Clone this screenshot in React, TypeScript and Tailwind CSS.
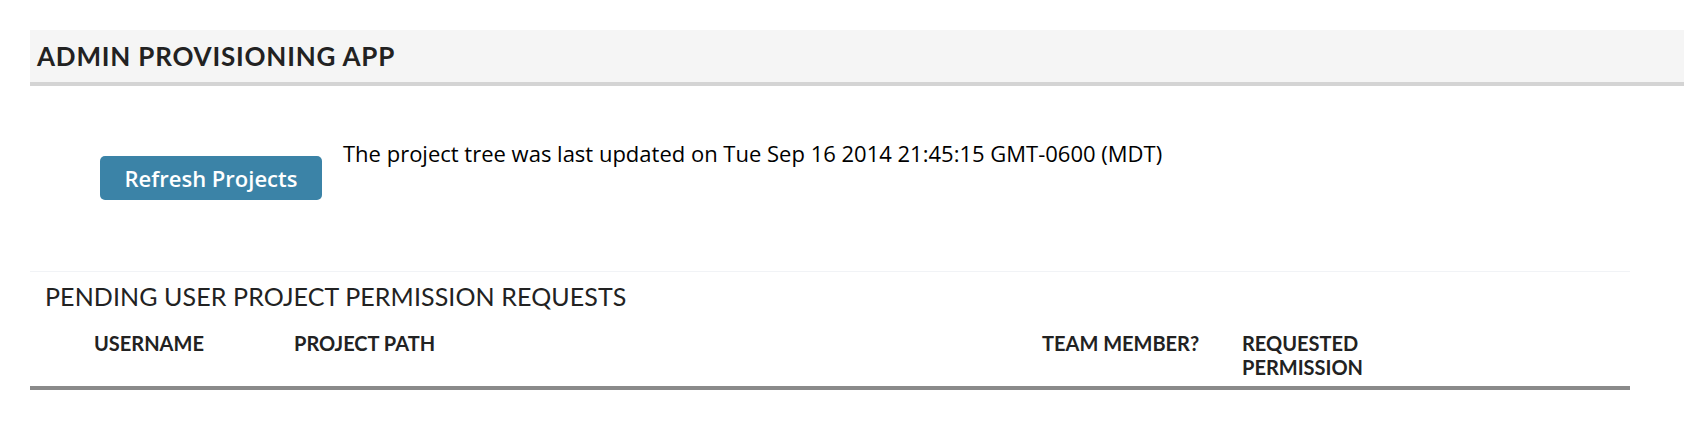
const columns = [
  { label: "USERNAME", width: "w-[200px]" },
  { label: "PROJECT PATH", width: "w-[748px]" },
  { label: "TEAM MEMBER?", width: "w-[200px]" },
  { label: "REQUESTED PERMISSION", width: "w-[140px]" },
];

function Header() {
  return (
    <div className="h-[56px] bg-[#f5f5f5] border-b-4 border-[#d4d4d4] flex items-center pl-[7px]">
      <h1 className="font-['Lato',sans-serif] font-bold text-[26px] tracking-[0.8px] text-[#222]">
        ADMIN PROVISIONING APP
      </h1>
    </div>
  );
}

function RefreshRow() {
  return (
    <div className="flex items-start pl-[70px]">
      <button className="mt-[70px] w-[222px] h-[44px] rounded-[5px] bg-[#3b83a7] text-white font-['Open_Sans',sans-serif] font-semibold text-[22px]">
        Refresh Projects
      </button>
      <p className="mt-[52px] ml-[21px] font-['Open_Sans',sans-serif] text-[22px] leading-[30px] text-black">
        The project tree was last updated on Tue Sep 16 2014 21:45:15 GMT-0600 (MDT)
      </p>
    </div>
  );
}

function PendingRequests() {
  return (
    <div className="mt-[71px] border-t border-[#f1f3f6]">
      <h2 className="mt-[8px] pl-[15px] font-['Lato',sans-serif] text-[25px] tracking-[0.1px] leading-[32px] text-[#222]">
        PENDING USER PROJECT PERMISSION REQUESTS
      </h2>
      <div className="mt-[19px] flex pl-[64px] pb-[7px] border-b-4 border-[#8a8a8a]">
        {columns.map((c) => (
          <div
            key={c.label}
            className={`${c.width} font-['Lato',sans-serif] font-bold text-[20px] leading-[24px] text-[#222]`}
          >
            {c.label}
          </div>
        ))}
      </div>
    </div>
  );
}

export default function App() {
  return (
    <div className="min-h-screen bg-white pt-[30px] pl-[30px]">
      <Header />
      <div className="w-[1600px]">
        <RefreshRow />
        <PendingRequests />
      </div>
    </div>
  );
}
